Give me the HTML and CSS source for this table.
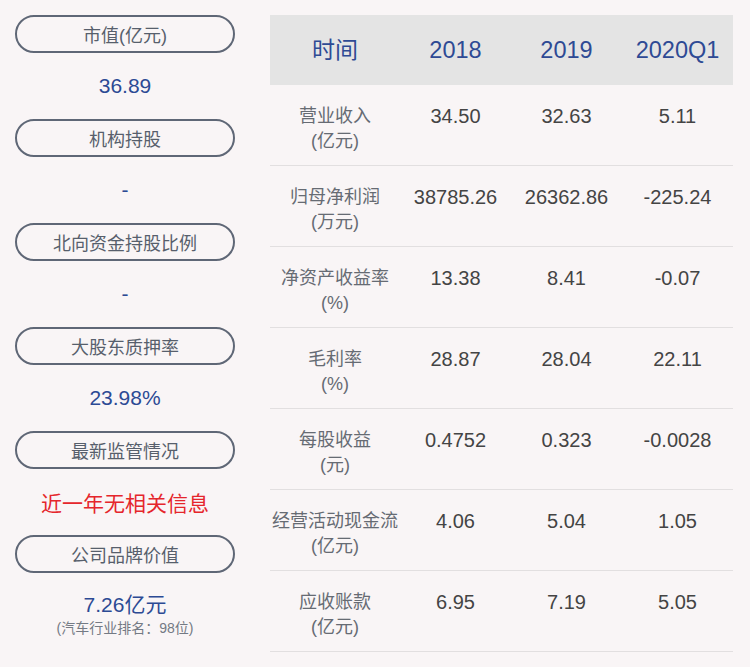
FILE: index.html
```html
<!DOCTYPE html>
<html lang="zh">
<head>
<meta charset="utf-8">
<link rel="stylesheet" href="styles.css">
</head>
<body>
<div class="page">
  <div class="side">
    <div class="item"><div class="pill">市值(亿元)</div><div class="val">36.89</div></div>
    <div class="item"><div class="pill">机构持股</div><div class="val">-</div></div>
    <div class="item"><div class="pill">北向资金持股比例</div><div class="val">-</div></div>
    <div class="item"><div class="pill">大股东质押率</div><div class="val">23.98%</div></div>
    <div class="item"><div class="pill">最新监管情况</div><div class="val red">近一年无相关信息</div></div>
    <div class="item"><div class="pill">公司品牌价值</div><div class="val last">7.26亿元<span class="sub">(汽车行业排名<span class="colon">：</span>98位)</span></div></div>
  </div>
  <div class="table">
    <div class="row head">
      <div class="c lab">时间</div><div class="c">2018</div><div class="c">2019</div><div class="c">2020Q1</div>
    </div>
    <div class="row">
      <div class="c lab">营业收入<br>(亿元)</div><div class="c">34.50</div><div class="c">32.63</div><div class="c">5.11</div>
    </div>
    <div class="row">
      <div class="c lab">归母净利润<br>(万元)</div><div class="c">38785.26</div><div class="c">26362.86</div><div class="c">-225.24</div>
    </div>
    <div class="row">
      <div class="c lab">净资产收益率<br>(%)</div><div class="c">13.38</div><div class="c">8.41</div><div class="c">-0.07</div>
    </div>
    <div class="row">
      <div class="c lab">毛利率<br>(%)</div><div class="c">28.87</div><div class="c">28.04</div><div class="c">22.11</div>
    </div>
    <div class="row">
      <div class="c lab">每股收益<br>(元)</div><div class="c">0.4752</div><div class="c">0.323</div><div class="c">-0.0028</div>
    </div>
    <div class="row">
      <div class="c lab">经营活动现金流<br>(亿元)</div><div class="c">4.06</div><div class="c">5.04</div><div class="c">1.05</div>
    </div>
    <div class="row">
      <div class="c lab">应收账款<br>(亿元)</div><div class="c">6.95</div><div class="c">7.19</div><div class="c">5.05</div>
    </div>
  </div>
</div>
</body>
</html>
```
FILE: styles.css
```css
html, body {
  margin: 0;
  padding: 0;
  background: #f9f5f6;
}
body {
  font-family: "Liberation Sans", "Noto Sans CJK SC", sans-serif;
  width: 750px;
  height: 667px;
  overflow: hidden;
}
.page {
  display: flex;
  gap: 35px;
  padding: 15px 0 0 15px;
}
.side {
  width: 220px;
  display: flex;
  flex-direction: column;
}
.item {
  display: flex;
  flex-direction: column;
  align-items: stretch;
}
.pill {
  height: 34px;
  border: 2px solid #5f6776;
  border-radius: 20px;
  display: flex;
  align-items: center;
  justify-content: center;
  font-size: 18px;
  color: #575f6c;
}
.val {
  height: 66px;
  display: flex;
  align-items: center;
  justify-content: center;
  font-size: 21px;
  color: #2c4a94;
}
.val.red {
  color: #e5262c;
}
.val.last {
  flex-direction: column;
  justify-content: flex-start;
  padding-top: 20px;
  height: auto;
  line-height: 24px;
}
.sub {
  font-size: 14px;
  color: #747a84;
  line-height: 20px;
}
.colon {
  font-family: "Noto Sans CJK TC", sans-serif;
}
.table {
  width: 463px;
  display: flex;
  flex-direction: column;
}
.row {
  display: grid;
  grid-template-columns: 130px 111px 111px 111px;
  height: 80px;
  border-bottom: 1px solid #e2dfe0;
  font-size: 20px;
  color: #444;
}
.row .c {
  text-align: center;
  padding-top: 19px;
  line-height: 25px;
}
.row .c.lab {
  font-size: 18px;
  color: #666b73;
}
.row.head {
  height: 70px;
  border-bottom: none;
  background: #e4e4e4;
  align-items: center;
  font-size: 23.5px;
  color: #2e4a94;
}
.row.head .c {
  padding-top: 0;
}
.row.head .c.lab {
  font-size: 23px;
  color: #2e4a94;
}
```
